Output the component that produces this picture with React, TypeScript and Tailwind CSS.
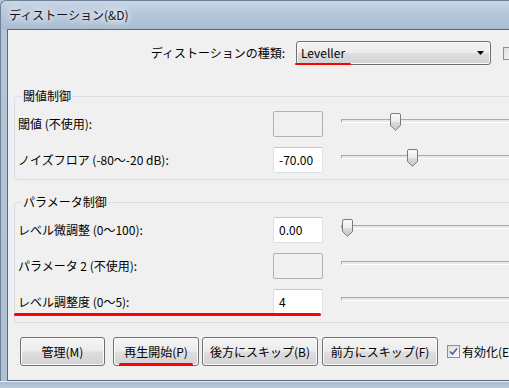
import React from 'react';

const Thumb = () => (
  <svg width="11" height="18" viewBox="0 0 11 18" className="block">
    <defs>
      <linearGradient id="thumbFill" x1="0" y1="0" x2="0" y2="1">
        <stop offset="0" stopColor="#fbfbfb" />
        <stop offset="0.5" stopColor="#ececec" />
        <stop offset="0.55" stopColor="#d9d9d9" />
        <stop offset="1" stopColor="#c9c9c9" />
      </linearGradient>
    </defs>
    <path d="M2 0.5 H9 A1.5 1.5 0 0 1 10.5 2 V12.5 L5.5 17.2 L0.5 12.5 V2 A1.5 1.5 0 0 1 2 0.5 Z" fill="url(#thumbFill)" stroke="#7b7b7b" />
  </svg>
);

function Slider({ thumb }: { thumb?: number }) {
  return (
    <div className="relative ml-[18px] mt-[2px] h-[18px] flex-1 self-start pt-[6px]">
      <div className="h-[4px] border-t border-l border-[#a9a9a9] border-b border-b-white bg-[#e9e9e9]" />
      {thumb !== undefined && (
        <div className="absolute top-0" style={{ left: thumb }}>
          <Thumb />
        </div>
      )}
    </div>
  );
}

function Field({ value, disabled }: { value?: string; disabled?: boolean }) {
  return (
    <div
      className={
        disabled
          ? 'w-[50px] h-[26px] shrink-0 rounded-[2px] border border-[#adb2b5] bg-[#f0f0f0]'
          : 'w-[50px] h-[26px] shrink-0 rounded-[2px] border border-[#dbdfe6] border-t-[#c3c7ce] bg-white flex items-center pl-[5px]'
      }
    >
      {value}
    </div>
  );
}

function Row({ label, value, disabled, thumb }: { label: string; value?: string; disabled?: boolean; thumb?: number }) {
  return (
    <div className="flex h-[26px]">
      <div className="w-[255px] shrink-0 self-center">{label}</div>
      <Field value={value} disabled={disabled} />
      <Slider thumb={thumb} />
    </div>
  );
}

const btn =
  'h-[29px] shrink-0 rounded-[3px] border border-[#707070] bg-[linear-gradient(180deg,#f4f4f4,#ececec_48%,#dedede_52%,#d2d2d2)] shadow-[inset_0_0_0_1px_#fbfbfb] flex items-center justify-center';

export default function App() {
  return (
    <div className="w-[509px] h-[388px] overflow-hidden flex flex-col bg-[#b7c8db] font-['Noto_Sans_CJK_JP','Noto_Sans',sans-serif] text-[12px] leading-[16px] text-black">
      {/* title bar */}
      <div className="h-[29px] shrink-0 flex items-center pl-[8px] rounded-tl-[6px] border-t border-l border-[#6f8196] bg-[linear-gradient(180deg,#c9d7e6,#b6c7da_45%,#a9bcd1)]">
        <span className="[text-shadow:0_0_6px_#ffffff,0_0_10px_#ffffff,0_0_14px_#ffffff] text-[#101020]">ディストーション(&amp;D)</span>
      </div>

      <div className="flex flex-1 min-h-0">
        <div className="w-[7px] shrink-0 border-l border-[#6f8196] bg-[linear-gradient(180deg,#b5c6d9,#aec0d4)]" />

        {/* client area */}
        <div className="relative w-[560px] shrink-0 flex flex-col border-t border-l border-b border-[#5a6878] bg-[#f0f0f0]">
          {/* type selector */}
          <div className="mt-[11px] flex h-[24px] items-center">
            <div className="w-[280px] shrink-0 pr-[3px] text-right">ディストーションの種類:</div>
            <div className="ml-[8px] flex h-[24px] w-[195px] shrink-0 items-center justify-between rounded-[3px] border border-[#707070] bg-[linear-gradient(180deg,#f4f4f4,#ececec_48%,#dedede_52%,#d2d2d2)] pl-[4px] pr-[6px] shadow-[inset_0_0_0_1px_#fbfbfb]">
              <span>Leveller</span>
              <svg width="7" height="4" viewBox="0 0 7 4">
                <path d="M0 0 H7 L3.5 4 Z" fill="#000" />
              </svg>
            </div>
            <div className="ml-[12px] h-[13px] w-[13px] shrink-0 border border-[#8e8f8f] bg-[linear-gradient(135deg,#dcdcdc,#fbfbfb)]" />
          </div>

          {/* threshold group */}
          <fieldset className="ml-[6px] mt-[23px] w-[540px] rounded-[3px] border border-[#d5dfe5] px-[3px] pb-[6px]">
            <legend className="ml-[4px] px-[1px] leading-[16px]">閾値制御</legend>
            <div className="flex flex-col gap-[10px] pt-[7px]">
              <Row label="閾値 (不使用):" disabled thumb={49} />
              <Row label="ノイズフロア (-80～-20 dB):" value="-70.00" thumb={66} />
            </div>
          </fieldset>

          {/* parameter group */}
          <fieldset className="ml-[6px] mt-[14px] w-[540px] rounded-[3px] border border-[#d5dfe5] px-[3px] pb-[7px]">
            <legend className="ml-[4px] px-[1px] leading-[16px]">パラメータ制御</legend>
            <div className="flex flex-col gap-[10px] pt-[7px]">
              <Row label="レベル微調整 (0～100):" value="0.00" thumb={1} />
              <Row label="パラメータ 2 (不使用):" disabled />
              <Row label="レベル調整度 (0～5):" value="4" />
            </div>
          </fieldset>

          {/* buttons */}
          <div className="mt-[14px] flex items-center pl-[12px]">
            <div className={btn + ' w-[85px]'}>管理(M)</div>
            <div className={btn + ' ml-[8px] w-[86px]'}>再生開始(P)</div>
            <div className={btn + ' ml-[3px] w-[116px]'}>後方にスキップ(B)</div>
            <div className={btn + ' ml-[4px] w-[116px]'}>前方にスキップ(F)</div>
            <div className="ml-[9px] flex h-[13px] w-[13px] shrink-0 items-center justify-center border border-[#8e8f8f] bg-[linear-gradient(135deg,#dcdcdc,#fbfbfb)]">
              <svg width="9" height="9" viewBox="0 0 9 9">
                <path d="M1 4.5 L3.5 7 L8 1.5" fill="none" stroke="#4b61a0" strokeWidth="1.6" />
              </svg>
            </div>
            <span className="ml-[2px] whitespace-nowrap">有効化(E)</span>
          </div>

          {/* red annotation marks */}
          <div className="absolute left-[287px] top-[33px] h-[2px] w-[56px] rounded-full bg-[#ff0000]" />
          <div className="absolute left-[6px] top-[283px] h-[3px] w-[307px] rounded-full bg-[#ff0000]" />
          <div className="absolute left-[111px] top-[333px] h-[3px] w-[74px] rounded-full bg-[#ff0000]" />
        </div>
      </div>

      <div className="h-[7px] shrink-0 border-t border-[#e3ebf4] bg-[linear-gradient(180deg,#a9bcd1,#b9c9db)]" />
    </div>
  );
}
